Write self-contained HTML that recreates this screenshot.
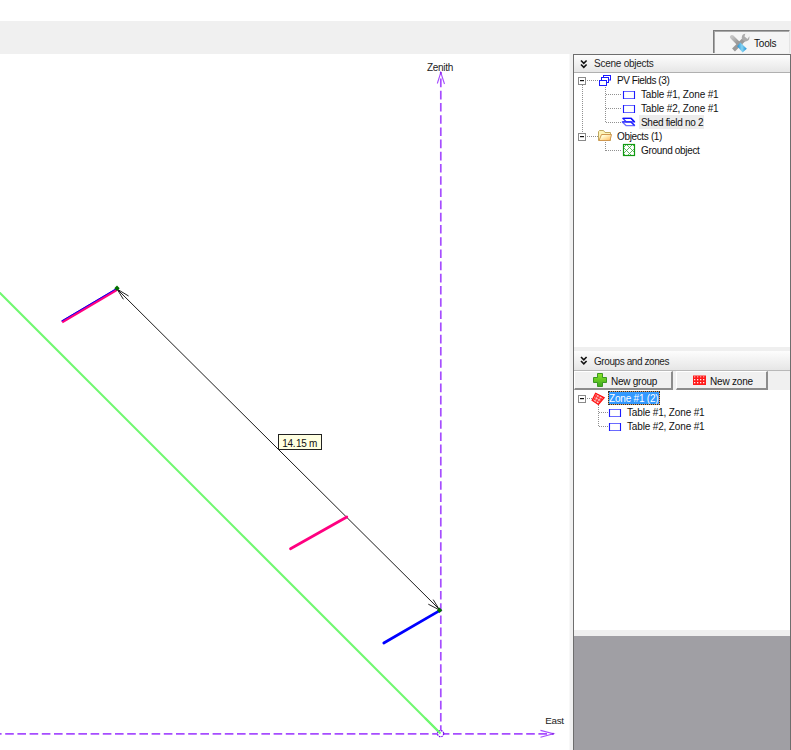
<!DOCTYPE html>
<html><head><meta charset="utf-8">
<style>
*{margin:0;padding:0;box-sizing:border-box}
html,body{width:791px;height:750px;overflow:hidden;background:#fff;font-family:"Liberation Sans",sans-serif;font-size:10px;color:#000}
.abs{position:absolute}
.t{position:absolute;white-space:nowrap;letter-spacing:-0.15px;line-height:12px;font-size:10px;color:#111}
</style></head><body>
<!-- top gray bar -->
<div class="abs" style="left:0;top:21px;width:791px;height:33px;background:#f0f0f0"></div>
<!-- Tools button -->
<div class="abs" style="left:713px;top:30px;width:77px;height:23px;background:#f5f5f5;border-top:1px solid #7c7c7c;border-left:1px solid #7c7c7c;border-right:1px solid #e4e4e4;box-shadow:inset 1px 1px 0 #a8a8a8"></div>
<div class="t" style="left:754px;top:38px;letter-spacing:-0.2px">Tools</div>
<!-- splitter -->
<div class="abs" style="left:569px;top:54px;width:4px;height:696px;background:#f1f1f1;border-left:1px solid #f8f8f8"></div>
<!-- right panel outer -->
<div class="abs" style="left:573px;top:54px;width:218px;height:696px;background:#fff;border-left:1px solid #6e6e6e;border-top:1px solid #6e6e6e;border-right:1px solid #6e6e6e"></div>
<!-- scene objects header -->
<div class="abs" style="left:574px;top:55px;width:216px;height:17px;background:linear-gradient(#fdfdfd,#e6e6e6)"></div>
<div class="abs" style="left:574px;top:72px;width:216px;height:1px;background:#b0b0b0"></div>
<div class="t" style="left:594px;top:58px;color:#1e1e1e;letter-spacing:-0.25px">Scene objects</div>
<!-- splitter between panels -->
<div class="abs" style="left:574px;top:347px;width:216px;height:4px;background:#efefef"></div>
<!-- groups header -->
<div class="abs" style="left:574px;top:351px;width:216px;height:19px;background:linear-gradient(#fdfdfd,#e6e6e6)"></div>
<div class="abs" style="left:574px;top:370px;width:216px;height:1px;background:#b8b8b8"></div>
<div class="t" style="left:594px;top:356px;color:#1e1e1e;letter-spacing:-0.42px">Groups and zones</div>
<!-- button bar -->
<div class="abs" style="left:574px;top:371px;width:216px;height:19px;background:#f0f0f0"></div>
<div class="abs" style="left:574px;top:371px;width:99px;height:19px;background:#f0f0f0;border-right:2px solid #8c8c8c;border-bottom:2px solid #8c8c8c;border-left:1px solid #fff;border-top:1px solid #fff"></div>
<div class="abs" style="left:676px;top:371px;width:92px;height:19px;background:#f0f0f0;border-right:2px solid #8c8c8c;border-bottom:2px solid #8c8c8c;border-left:1px solid #fff;border-top:1px solid #fff"></div>
<div class="t" style="left:611px;top:376px;letter-spacing:-0.25px">New group</div>
<div class="t" style="left:710px;top:376px;letter-spacing:-0.2px">New zone</div>
<!-- bottom gray area -->
<div class="abs" style="left:574px;top:630px;width:216px;height:6px;background:#efefef"></div>
<div class="abs" style="left:574px;top:636px;width:216px;height:114px;background:#a09fa4"></div>

<!-- tree texts -->
<div class="t" style="left:617px;top:75px;letter-spacing:-0.42px">PV Fields (3)</div>
<div class="t" style="left:641px;top:89px">Table #1, Zone #1</div>
<div class="t" style="left:641px;top:103px">Table #2, Zone #1</div>
<div class="abs" style="left:639px;top:115px;width:65px;height:14px;background:#ececec"></div>
<div class="t" style="left:641px;top:117px;letter-spacing:-0.3px">Shed field no 2</div>
<div class="t" style="left:617px;top:131px;letter-spacing:-0.35px">Objects (1)</div>
<div class="t" style="left:641px;top:145px;letter-spacing:-0.33px">Ground object</div>

<div class="abs" style="left:608px;top:391px;width:52px;height:14px;background:#3399ff;box-shadow:inset 0 0 0 1px #e0a060"></div><div class="abs" style="left:608px;top:391px;width:52px;height:14px;border:1px dotted #303030"></div>
<div class="t" style="left:609px;top:393px;color:#fff;letter-spacing:-0.2px">Zone #1 (2)</div>
<div class="t" style="left:627px;top:407px">Table #1, Zone #1</div>
<div class="t" style="left:627px;top:421px">Table #2, Zone #1</div>

<!-- CANVAS -->
<svg class="abs" style="left:0;top:0" width="791" height="750" viewBox="0 0 791 750">
<g fill="none">
<line x1="-10" y1="283" x2="440.5" y2="733.5" stroke="#70f870" stroke-width="2"/>
<line x1="440.8" y1="733.8" x2="0" y2="733.8" stroke="#a64dff" stroke-width="1.7" stroke-dasharray="8.6 3.6"/>
<line x1="440.8" y1="733.8" x2="553" y2="733.8" stroke="#a64dff" stroke-width="1.7" stroke-dasharray="8.6 3.6"/>
<line x1="440.8" y1="733.8" x2="440.8" y2="73" stroke="#a64dff" stroke-width="1.7" stroke-dasharray="8.6 3.6"/>
<path d="M437.3 83.5 L440.8 72.5 L444.5 84" stroke="#a64dff" stroke-width="1.1"/>
<circle cx="440.8" cy="72.8" r="1" fill="#8a2be2"/>
<path d="M540.5 730.4 L553.4 733.8 L540.5 737.3" stroke="#a64dff" stroke-width="1.1"/>
<circle cx="553" cy="733.8" r="1" fill="#8a2be2"/>
<circle cx="440.6" cy="733.6" r="3.1" stroke="#7a10f0" stroke-width="1.3" stroke-dasharray="1.6 0.85" fill="#fff"/>
<line x1="425" y1="718" x2="440.5" y2="733.5" stroke="#70f870" stroke-width="2"/>
<line x1="117" y1="289" x2="439.8" y2="609.8" stroke="#1a1a1a" stroke-width="1"/>
<path d="M123.4 299.3 L117 289 L128.6 296" stroke="#222" stroke-width="1"/>
<path d="M428.3 604.2 L439.6 610 L433.2 599.6" stroke="#222" stroke-width="1"/>
<line x1="62" y1="322" x2="117" y2="289.5" stroke="#ff0080" stroke-width="3"/>
<line x1="61.5" y1="321" x2="116.5" y2="288.5" stroke="#0000ff" stroke-width="1"/>
<line x1="290.5" y1="548.8" x2="346.8" y2="517" stroke="#ff0080" stroke-width="2.7" stroke-linecap="round"/>
<line x1="383.8" y1="643" x2="439.2" y2="610.8" stroke="#0000ff" stroke-width="2.7" stroke-linecap="round"/>
</g>
<path d="M117 285.6 L119.7 288.3 L117 291 L114.3 288.3 Z" fill="#007000"/>
<path d="M439.6 607.5 L442.3 610.2 L439.6 612.9 L436.9 610.2 Z" fill="#007000"/>
<rect x="278.5" y="434.5" width="43" height="15" fill="#ffffe1" stroke="#222" stroke-width="1"/>
<text x="282.3" y="446.6" font-family="Liberation Sans" font-size="10" letter-spacing="-0.35" fill="#111">14.<tspan dx="0.9">15 m</tspan></text>
<text x="427" y="70.5" font-family="Liberation Sans" font-size="10" letter-spacing="-0.3" fill="#222">Zenith</text>
<text x="545.2" y="723.8" font-family="Liberation Sans" font-size="9.85" letter-spacing="-0.3" fill="#222">East</text>
</svg>

<!-- PANEL ICONS -->
<svg class="abs" style="left:0;top:0" width="791" height="750" viewBox="0 0 791 750">
<defs>
<pattern id="mesh" width="3" height="3" patternUnits="userSpaceOnUse"><rect width="3" height="3" fill="#ff1a1a"/><rect x="1" y="1" width="1.3" height="1.3" fill="#fff" opacity="0.9"/></pattern>
<pattern id="zmesh" width="3" height="3" patternUnits="userSpaceOnUse" patternTransform="rotate(30)"><rect width="3" height="3" fill="#ff1a1a"/><rect x="0.8" y="0.8" width="1.8" height="1.8" fill="#fff"/></pattern>
<clipPath id="gclip"><rect x="623" y="144" width="12" height="12"/></clipPath>
<linearGradient id="plusg" x1="0" y1="0" x2="0" y2="1"><stop offset="0" stop-color="#8de62a"/><stop offset="1" stop-color="#3aa81e"/></linearGradient>
<linearGradient id="foldg" x1="0" y1="0" x2="1" y2="1"><stop offset="0.3" stop-color="#fffbd2"/><stop offset="1" stop-color="#ffb85a"/></linearGradient>
<linearGradient id="blueg" x1="0" y1="0" x2="1" y2="0"><stop offset="0" stop-color="#1f8fd6"/><stop offset="0.5" stop-color="#86d4f2"/><stop offset="1" stop-color="#1f8fd6"/></linearGradient>
</defs>
<g fill="none" stroke-width="1.6" stroke="#111">
<polyline points="581,60.5 583.8,63.3 586.6,60.5"/>
<polyline points="581,64.5 583.8,67.3 586.6,64.5"/>
<polyline points="581,357 583.8,359.8 586.6,357"/>
<polyline points="581,361 583.8,363.8 586.6,361"/>
</g>
<g stroke="#909090" stroke-width="1" stroke-dasharray="1 1" fill="none">
<line x1="582.5" y1="85" x2="582.5" y2="133"/>
<line x1="587" y1="80.5" x2="599" y2="80.5"/>
<line x1="605.5" y1="87" x2="605.5" y2="123"/>
<line x1="606" y1="94.5" x2="622" y2="94.5"/>
<line x1="606" y1="108.5" x2="622" y2="108.5"/>
<line x1="606" y1="122.5" x2="622" y2="122.5"/>
<line x1="587" y1="136.5" x2="598" y2="136.5"/>
<line x1="605.5" y1="142" x2="605.5" y2="151"/>
<line x1="606" y1="150.5" x2="622" y2="150.5"/>
<line x1="587" y1="398.5" x2="592" y2="398.5"/>
<line x1="598.5" y1="405" x2="598.5" y2="427"/>
<line x1="599" y1="412.5" x2="608" y2="412.5"/>
<line x1="599" y1="426.5" x2="608" y2="426.5"/>
</g>
<g>
<rect x="578.5" y="77.5" width="7" height="7" fill="#fff" stroke="#8a8a8a"/>
<rect x="580" y="80" width="4" height="1.2" fill="#111"/>
<rect x="578.5" y="133.5" width="7" height="7" fill="#fff" stroke="#8a8a8a"/>
<rect x="580" y="136" width="4" height="1.2" fill="#111"/>
<rect x="578.5" y="395.5" width="7" height="7" fill="#fff" stroke="#8a8a8a"/>
<rect x="580" y="398" width="4" height="1.2" fill="#111"/>
</g>
<g stroke="#1a1aff" stroke-width="1" fill="#fff">
<rect x="603.5" y="75.5" width="7" height="4.5"/>
<rect x="601.5" y="77.5" width="7" height="5"/>
<rect x="599.5" y="80.5" width="7" height="5"/>
</g>
<g><rect x="623" y="91" width="12" height="8" fill="#fff"/><path d="M623.5 91.5 H634.5 M623.5 98.5 H634.5" stroke="#6a6aff" stroke-width="1.1"/><path d="M623.5 91 V99 M634.5 91 V99" stroke="#1c1cff" stroke-width="1.1"/><rect x="623" y="105" width="12" height="8" fill="#fff"/><path d="M623.5 105.5 H634.5 M623.5 112.5 H634.5" stroke="#6a6aff" stroke-width="1.1"/><path d="M623.5 105 V113 M634.5 105 V113" stroke="#1c1cff" stroke-width="1.1"/><rect x="609" y="409" width="12" height="8" fill="#fff"/><path d="M609.5 409.5 H620.5 M609.5 416.5 H620.5" stroke="#6a6aff" stroke-width="1.1"/><path d="M609.5 409 V417 M620.5 409 V417" stroke="#1c1cff" stroke-width="1.1"/><rect x="609" y="423" width="12" height="8" fill="#fff"/><path d="M609.5 423.5 H620.5 M609.5 430.5 H620.5" stroke="#6a6aff" stroke-width="1.1"/><path d="M609.5 423 V431 M620.5 423 V431" stroke="#1c1cff" stroke-width="1.1"/></g>
<g stroke="#1a1aff" stroke-width="1.35" fill="none" stroke-linejoin="round">
<path d="M631 118.3 H622.8 L626.4 121.9 H634.6 Z" stroke="#3a3aff"/>
<path d="M622.3 121.9 H631 L634.6 125.6 H626 Z" stroke="#7070ff"/>
<path d="M622.8 118.3 H631 L634.6 121.9" stroke="#1010ff"/>
<path d="M622.3 121.9 H631 L634.6 125.5" stroke="#2020ff"/>
</g>
<g stroke-width="1" stroke-linejoin="round">
<path d="M598.5 140.5 V131.5 L599.5 130.5 H603.5 L605 132.5 H610.5 V140.5 Z" fill="#fdf3b8" stroke="#c0a860"/>
<path d="M599 140.5 L601.5 134.5 H611.5 L610 140.5 Z" fill="url(#foldg)" stroke="#d09850"/>
</g>
<g>
<rect x="623" y="144" width="12" height="12" fill="#fff"/>
<g clip-path="url(#gclip)" stroke="#3fa83f" stroke-width="0.8">
<path d="M620 151 L630 141 M620 157 L636 141 M624 159 L638 145 M630 159 L638 151"/>
<path d="M620 150 L630 160 M620 144 L636 160 M623 141 L639 157 M629 141 L639 151"/>
</g>
<rect x="623.5" y="144.5" width="11" height="11" fill="none" stroke="#109a10" stroke-width="1.2"/>
</g>
<path d="M595.6 393.2 L604.2 397.6 L598.4 404.4 L592.1 400.4 Z" fill="url(#zmesh)" stroke="#ff1010" stroke-width="1.2"/>
<path d="M597.5 373.5 H602.5 V377.5 H606.5 V382.5 H602.5 V386.5 H597.5 V382.5 H593.5 V377.5 H597.5 Z" fill="url(#plusg)" stroke="#2e8f16" stroke-width="0.9"/>
<rect x="693.5" y="376" width="12" height="8.5" fill="url(#mesh)" stroke="#ff1a1a" stroke-width="1"/>
<g>
<linearGradient id="grayg" x1="0" y1="0" x2="1" y2="1"><stop offset="0" stop-color="#c4c4c4"/><stop offset="1" stop-color="#7e7e7e"/></linearGradient>
<line x1="732" y1="37" x2="741" y2="46" stroke="url(#grayg)" stroke-width="4" stroke-linecap="round"/>
<line x1="733.5" y1="50" x2="744" y2="39.5" stroke="#9a9a9a" stroke-width="4"/>
<circle cx="745.6" cy="37.6" r="3.8" fill="#acacac"/>
<path d="M745.5 33 L750.5 34.5 L747.5 39 L744.5 36.5 Z" fill="#f4f4f4"/>
<path d="M740.3 42.5 L746.8 48.8 L742.6 52.6 L737.2 46.2 Z" fill="url(#blueg)"/>
</g>
</svg>
</body></html>
